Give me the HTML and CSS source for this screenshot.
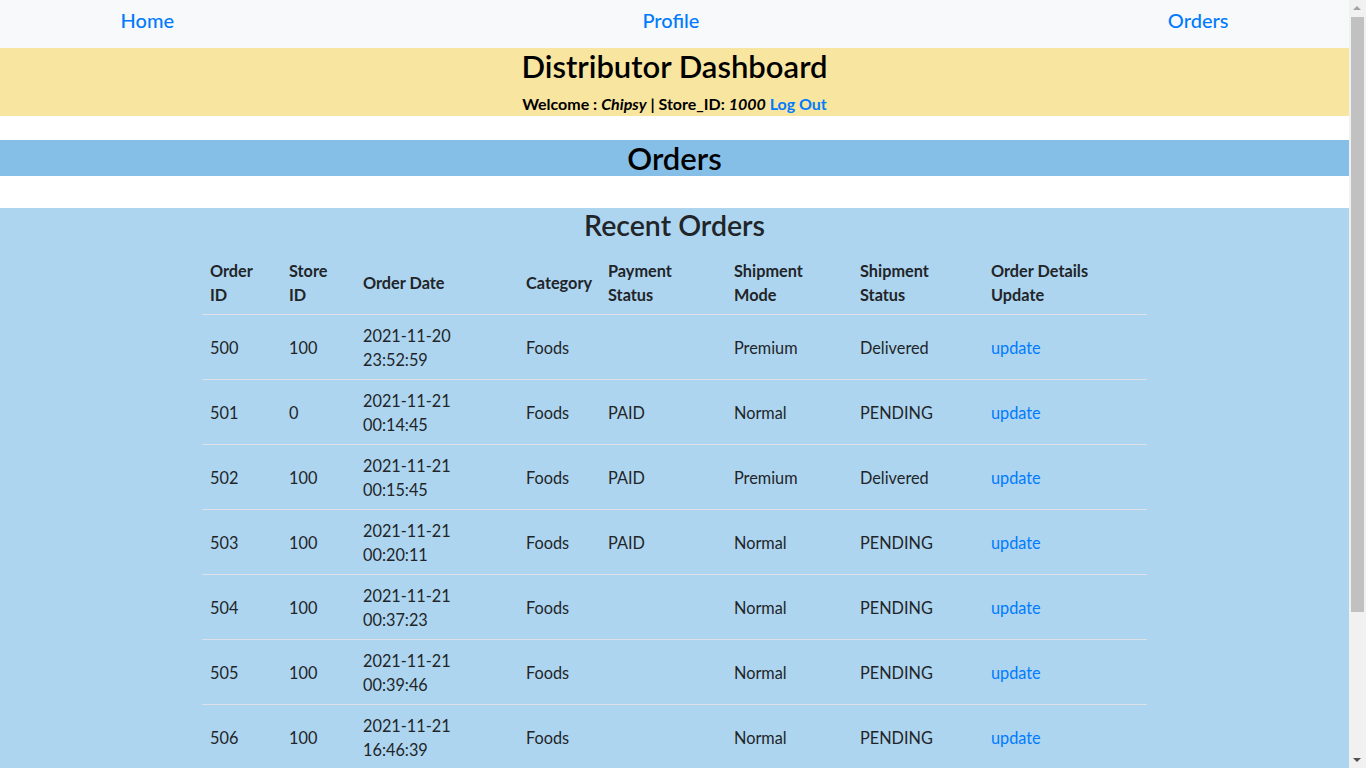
FILE: index.html
```html
<!DOCTYPE html>
<html lang="en">
<head>
<meta charset="utf-8">
<title>Distributor Dashboard - Orders</title>
<link rel="stylesheet" href="styles.css">
</head>
<body>
<div class="page">
<nav class="topnav">
  <div class="nav-inner">
    <a class="nav-link" href="#">Home</a>
    <a class="nav-link" href="#">Profile</a>
    <a class="nav-link" href="#">Orders</a>
  </div>
</nav>
<header class="dash-header">
  <h1 class="dash-title">Distributor Dashboard</h1>
  <p class="welcome">Welcome : <em>Chipsy</em> | Store_ID: <em>1000</em> <a href="#">Log Out</a></p>
</header>
<div class="page-band">
  <h1 class="band-title">Orders</h1>
</div>
<section class="orders">
  <h2 class="orders-title">Recent Orders</h2>
  <table class="orders-table">
    <colgroup>
      <col class="c1"><col class="c2"><col class="c3"><col class="c4"><col class="c5"><col class="c6"><col class="c7"><col class="c8">
    </colgroup>
    <thead>
      <tr>
        <th>Order<br>ID</th>
        <th>Store<br>ID</th>
        <th>Order Date</th>
        <th>Category</th>
        <th>Payment<br>Status</th>
        <th>Shipment<br>Mode</th>
        <th>Shipment<br>Status</th>
        <th>Order Details<br>Update</th>
      </tr>
    </thead>
    <tbody>
      <tr><td>500</td><td>100</td><td>2021-11-20<br>23:52:59</td><td>Foods</td><td></td><td>Premium</td><td>Delivered</td><td><a href="#">update</a></td></tr>
      <tr><td>501</td><td>0</td><td>2021-11-21<br>00:14:45</td><td>Foods</td><td>PAID</td><td>Normal</td><td>PENDING</td><td><a href="#">update</a></td></tr>
      <tr><td>502</td><td>100</td><td>2021-11-21<br>00:15:45</td><td>Foods</td><td>PAID</td><td>Premium</td><td>Delivered</td><td><a href="#">update</a></td></tr>
      <tr><td>503</td><td>100</td><td>2021-11-21<br>00:20:11</td><td>Foods</td><td>PAID</td><td>Normal</td><td>PENDING</td><td><a href="#">update</a></td></tr>
      <tr><td>504</td><td>100</td><td>2021-11-21<br>00:37:23</td><td>Foods</td><td></td><td>Normal</td><td>PENDING</td><td><a href="#">update</a></td></tr>
      <tr><td>505</td><td>100</td><td>2021-11-21<br>00:39:46</td><td>Foods</td><td></td><td>Normal</td><td>PENDING</td><td><a href="#">update</a></td></tr>
      <tr><td>506</td><td>100</td><td>2021-11-21<br>16:46:39</td><td>Foods</td><td></td><td>Normal</td><td>PENDING</td><td><a href="#">update</a></td></tr>
    </tbody>
  </table>
</section>
</div>
<div class="fake-scrollbar" aria-hidden="true">
  <span class="sb-arrow sb-up"></span>
  <span class="sb-thumb"></span>
  <span class="sb-arrow sb-down"></span>
</div>
</body>
</html>
```

FILE: styles.css
```css
* { box-sizing: border-box; }
html, body { margin: 0; padding: 0; }
body {
  font-family: Lato, "Open Sans", "Liberation Sans", sans-serif;
  font-size: 16px;
  line-height: 1.5;
  color: #212529;
  background: #fff;
  height: 768px;
  overflow: hidden;
}
a { color: #007bff; text-decoration: none; }

.page { margin-right: 17px; }

.topnav { background: #f8f9fa; height: 48px; }
.nav-inner {
  max-width: 1140px;
  margin: 0 auto;
  height: 48px;
  display: flex;
  justify-content: space-between;
  align-items: center;
}
.nav-link {
  font-size: 20px;
  font-weight: 500;
  padding: 0 16px;
  line-height: 24px;
  margin-top: -8px;
}

.dash-header {
  background: #f8e59f;
  text-align: center;
  height: 68px;
  color: #000;
}
.dash-title {
  margin: 0;
  font-size: 31px;
  font-weight: 600;
  line-height: 36px;
}
.welcome {
  margin: 8px 0 0;
  font-weight: 700;
  line-height: 24px;
}
.welcome em { font-style: italic; }

.page-band {
  background: #85bfe7;
  margin-top: 24px;
  height: 36px;
  text-align: center;
}
.band-title {
  margin: 0;
  font-size: 31px;
  font-weight: 600;
  line-height: 36px;
  color: #000;
}

.orders {
  background: #aed5ef;
  margin-top: 32px;
  padding-bottom: 40px;
}
.orders-title {
  margin: 0;
  text-align: center;
  font-size: 28.5px;
  font-weight: 600;
  line-height: 34px;
}
.orders-table {
  width: 945px;
  margin: 8px auto 0;
  border-collapse: collapse;
  table-layout: fixed;
  font-size: 16.3px;
}
.c1 { width: 79px; }
.c2 { width: 74px; }
.c3 { width: 163px; }
.c4 { width: 82px; }
.c5 { width: 126px; }
.c6 { width: 126px; }
.c7 { width: 131px; }
.c8 { width: 164px; }
.orders-table th,
.orders-table td {
  text-align: left;
  vertical-align: middle;
  padding: 9px 8px 7px;
  line-height: 24px;
}
.orders-table th {
  font-weight: 700;
  border-bottom: 1px solid #dee2e6;
}
.orders-table td { border-bottom: 1px solid #dee2e6; }

.fake-scrollbar {
  position: fixed;
  top: 0;
  right: 0;
  width: 17px;
  height: 768px;
  background: #f1f1f1;
}
.sb-thumb {
  position: absolute;
  left: 2px;
  top: 17px;
  width: 13px;
  height: 595px;
  background: #c1c1c1;
}
.sb-arrow {
  position: absolute;
  left: 4px;
  width: 0;
  height: 0;
  border-left: 4.5px solid transparent;
  border-right: 4.5px solid transparent;
}
.sb-up {
  top: 6px;
  border-bottom: 4.5px solid #a3a3a3;
}
.sb-down {
  bottom: 6px;
  border-top: 4.5px solid #505050;
}
```
